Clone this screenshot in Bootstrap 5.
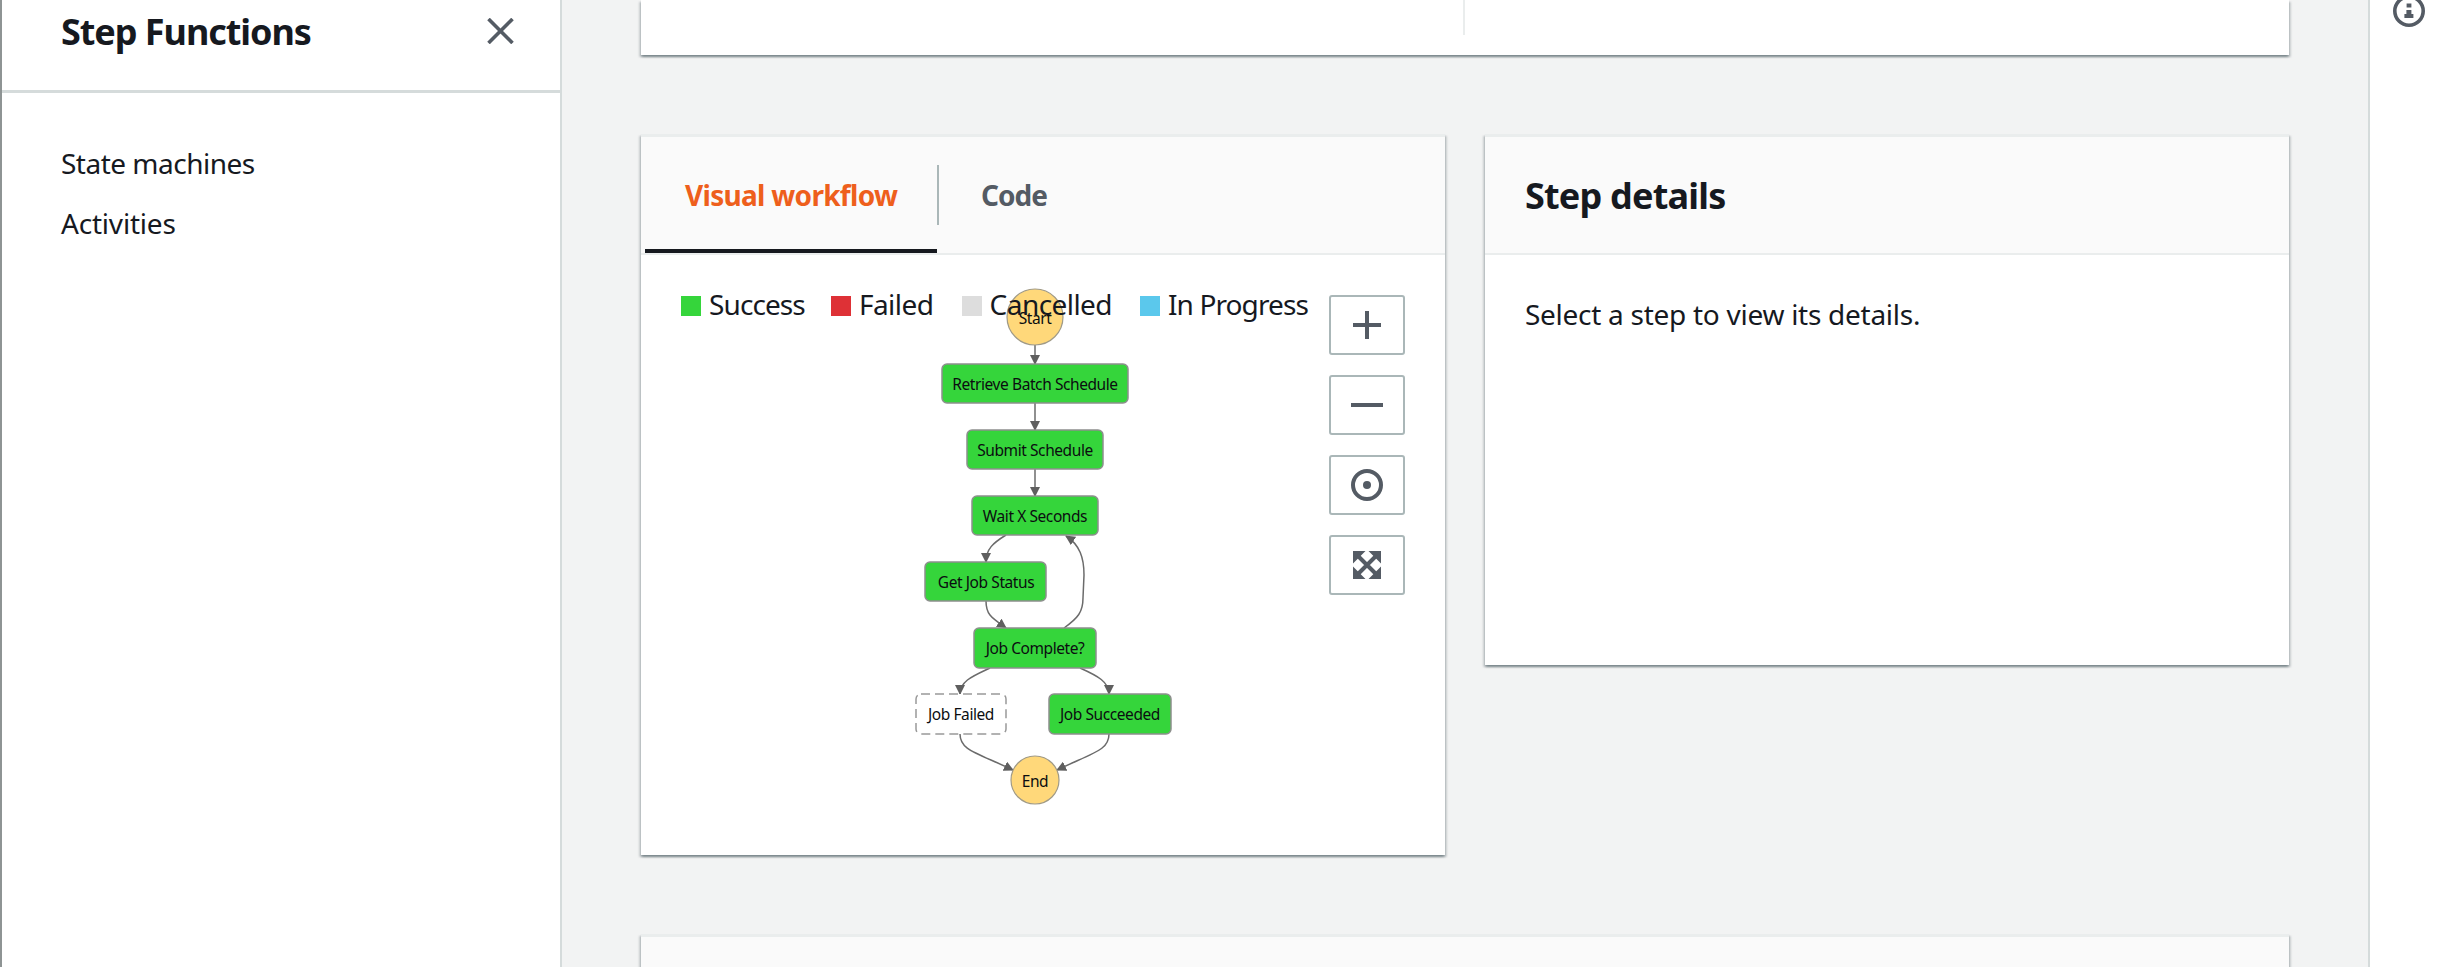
<!DOCTYPE html>
<html lang="en">
<head>
<meta charset="utf-8">
<title>Step Functions</title>
<link href="https://cdn.jsdelivr.net/npm/bootstrap@5.3.0/dist/css/bootstrap.min.css" rel="stylesheet">
<style>
html,body{height:967px;overflow:hidden}
body{font-family:"Noto Sans","Open Sans",sans-serif;font-size:28px;color:#16191f;background:#f2f3f3}
.shell{height:967px;overflow:hidden}
.side-panel{width:562px;flex:none;background:#fff;border-left:2px solid #8e9494;border-right:2px solid #d5dbdb}
.side-head{height:93px;border-bottom:3px solid #d5dbdb;padding:10px 0 0 59px}
.side-title{font-size:36px;font-weight:700;line-height:44px;margin:0;letter-spacing:-1.05px}
.side-close{position:absolute;left:485px;top:18px;width:27px;height:26px}
.side-nav{padding:40px 0 0 59px}
.side-nav a{display:block;color:#16191f;text-decoration:none;line-height:60px;letter-spacing:-.5px}
.side-nav a+a{letter-spacing:-.2px}
.main-area{flex:1 1 auto;min-width:0;padding:0 79px;background:#f2f3f3}
.aws-card{--bs-card-border-width:0;--bs-card-border-radius:0;--bs-card-inner-border-radius:0;--bs-card-cap-padding-y:0;--bs-card-cap-padding-x:0;--bs-card-cap-bg:#fafafa;border-top:3px solid #eaeded;box-shadow:0 2px 2px rgba(0,28,36,.3),2px 2px 2px rgba(0,28,36,.15),-2px 2px 2px rgba(0,28,36,.15)}
.top-card{height:55px;border-top:0;margin-bottom:79px}
.top-split{width:2px;height:35px;background:#eaeded;margin-left:822px}
.pair{gap:40px;height:721px;margin-bottom:79px}
.half{width:804px;flex:none}
.wf-card{height:721px}
.detail-card{height:531px}
.tab-head{height:118px;border-bottom:2px solid #eaeded;padding-left:4px;background:#fafafa}
.tab-one{width:292px;height:116px;border-bottom:4px solid #16191f;padding:36px 0 0 40px;color:#ee5f1c;font-weight:700;line-height:44px;position:relative;letter-spacing:-.7px}
.tab-one::after{content:"";position:absolute;right:-2px;top:28px;height:60px;width:2px;background:#aab7b8}
.tab-two{padding:36px 0 0 44px;color:#545b64;font-weight:700;line-height:44px;letter-spacing:-1px}
.wf-body{position:relative;flex:1 1 auto;background:#fff}
.legend-row{position:absolute;left:40px;top:29px;gap:28px;line-height:40px;letter-spacing:-.9px}
.leg-fail{margin-left:-2px;letter-spacing:-.5px}
.leg-can{letter-spacing:-.55px}
.swatch{display:inline-block;width:20px;height:20px;margin-right:8px;vertical-align:-1px}
.sw-ok{background:#35d53b}.sw-bad{background:#de3136}.sw-can{background:#ddd}.sw-run{background:#5bc8ec}
.graph{position:absolute;left:0;top:0;width:804px;height:600px}
.graph text{font-family:"Noto Sans",sans-serif;font-size:15.5px;letter-spacing:-.42px;fill:#0b0d10;text-anchor:middle;dominant-baseline:central}
.graph .nd{fill:#35d53b;stroke:#8d8f8d;stroke-width:1.5}
.graph .nd-fail{fill:#fff;stroke:#999;stroke-width:1.5;stroke-dasharray:9 5}
.graph .nd-end{fill:#ffd87a;stroke:#a09a86;stroke-width:1.2}
.graph .edge{fill:none;stroke:#6b6b6b;stroke-width:1.5}
.graph .tip{fill:#5f5f5f}
.tool-col{position:absolute;left:688px;top:40px;gap:20px}
.tool-btn{--bs-btn-padding-x:0;--bs-btn-padding-y:0;--bs-btn-border-width:2px;--bs-btn-border-color:#aab7b8;--bs-btn-border-radius:3px;--bs-btn-bg:#fff;width:76px;height:60px;display:flex;align-items:center;justify-content:center}
.detail-title{height:118px;border-bottom:2px solid #eaeded;padding:0 40px;font-size:36px;font-weight:700;line-height:118px;margin:0;letter-spacing:-.8px;background:#fafafa}
.detail-text{padding:39px 40px 0;line-height:40px;margin:0;letter-spacing:-.27px}
.low-card{height:33px}
.low-head{height:30px;background:#fafafa}
.right-rail{width:74px;flex:none;background:#fff;border-left:2px solid #d5dbdb;padding:0}
.info-ico{display:block;margin:-5px 0 0 23px}
</style>
</head>
<body>
<div class="shell d-flex">
  <aside class="side-panel position-relative">
    <div class="side-head">
      <h2 class="side-title">Step Functions</h2>
    </div>
    <svg class="side-close" viewBox="0 0 27 26"><path d="M1.5 1 25.5 25M25.5 1 1.5 25" fill="none" stroke="#545b64" stroke-width="3.6"/></svg>
    <nav class="side-nav">
      <a href="#">State machines</a>
      <a href="#">Activities</a>
    </nav>
  </aside>
  <main class="main-area">
    <div class="card aws-card top-card"><div class="top-split"></div></div>
    <div class="d-flex pair">
      <div class="half">
        <div class="card aws-card wf-card">
          <div class="d-flex tab-head">
            <div class="tab-one">Visual workflow</div>
            <div class="tab-two">Code</div>
          </div>
          <div class="wf-body">
            <svg class="graph" viewBox="641 255 804 600" aria-label="State machine graph">
              <defs>
                <marker id="ah" markerWidth="10" markerHeight="10" refX="9" refY="5" orient="auto" markerUnits="userSpaceOnUse"><path class="tip" d="M0 0 10 5 0 10z"/></marker>
              </defs>
              <path class="edge" marker-end="url(#ah)" d="M1035 345V364"/>
              <path class="edge" marker-end="url(#ah)" d="M1035 403V430"/>
              <path class="edge" marker-end="url(#ah)" d="M1035 469V496"/>
              <path class="edge" marker-end="url(#ah)" d="M1006 535C993 543 986 549 986 562"/>
              <path class="edge" marker-end="url(#ah)" d="M1064 628C1078 618 1083 612 1083 598L1084 575C1084 558 1080 545 1066 536"/>
              <path class="edge" marker-end="url(#ah)" d="M986 601C986 615 992 618 1006 628"/>
              <path class="edge" marker-end="url(#ah)" d="M990 668C973 676 960 681 960 694"/>
              <path class="edge" marker-end="url(#ah)" d="M1080 668C1098 676 1109 682 1109 694"/>
              <path class="edge" marker-end="url(#ah)" d="M960 734C960 750 975 752 1013 770"/>
              <path class="edge" marker-end="url(#ah)" d="M1109 734C1109 750 1095 752 1057 770"/>
              <ellipse class="nd-end" cx="1035" cy="317" rx="28" ry="28"/><text x="1035" y="318">Start</text>
              <rect class="nd" x="942" y="364" width="186" height="39" rx="5"/><text x="1035" y="384">Retrieve Batch Schedule</text>
              <rect class="nd" x="967" y="430" width="136" height="39" rx="5"/><text x="1035" y="450">Submit Schedule</text>
              <rect class="nd" x="972" y="496" width="126" height="39" rx="5"/><text x="1035" y="516">Wait X Seconds</text>
              <rect class="nd" x="925" y="562" width="121" height="39" rx="5"/><text x="986" y="582">Get Job Status</text>
              <rect class="nd" x="974" y="628" width="122" height="40" rx="5"/><text x="1035" y="648">Job Complete?</text>
              <rect class="nd-fail" x="916" y="694" width="90" height="40" rx="5"/><text x="961" y="714">Job Failed</text>
              <rect class="nd" x="1049" y="694" width="122" height="40" rx="5"/><text x="1110" y="714">Job Succeeded</text>
              <circle class="nd-end" cx="1035" cy="780" r="24"/><text x="1035" y="781">End</text>
            </svg>
            <div class="legend-row d-flex">
              <span><i class="swatch sw-ok"></i>Success</span>
              <span class="leg-fail"><i class="swatch sw-bad"></i>Failed</span>
              <span class="leg-can"><i class="swatch sw-can"></i>Cancelled</span>
              <span><i class="swatch sw-run"></i>In Progress</span>
            </div>
            <div class="tool-col d-flex flex-column">
              <button class="btn tool-btn" aria-label="Zoom in"><svg width="28" height="28" viewBox="0 0 28 28"><path d="M14 0V28M0 14H28" stroke="#545b64" stroke-width="4"/></svg></button>
              <button class="btn tool-btn" aria-label="Zoom out"><svg width="32" height="4" viewBox="0 0 32 4"><path d="M0 2H32" stroke="#545b64" stroke-width="4"/></svg></button>
              <button class="btn tool-btn" aria-label="Center"><svg width="32" height="32" viewBox="0 0 32 32"><circle cx="16" cy="16" r="14" fill="none" stroke="#545b64" stroke-width="4"/><circle cx="16" cy="16" r="4" fill="#545b64"/></svg></button>
              <button class="btn tool-btn" aria-label="Fit"><svg width="28" height="28" viewBox="0 0 28 28"><path fill="#545b64" d="M0 0H12.5L0 12.5zM28 0V12.5L15.5 0zM0 28V15.5L12.5 28zM28 28H15.5L28 15.5z"/><path d="M4 4 24 24M24 4 4 24" stroke="#545b64" stroke-width="4"/></svg></button>
            </div>
          </div>
        </div>
      </div>
      <div class="half">
        <div class="card aws-card detail-card">
          <h2 class="detail-title">Step details</h2>
          <p class="detail-text">Select a step to view its details.</p>
        </div>
      </div>
    </div>
    <div class="card aws-card low-card"><div class="low-head"></div></div>
  </main>
  <aside class="right-rail">
    <svg class="info-ico" width="32" height="32" viewBox="0 0 32 32"><circle cx="16" cy="16" r="14.2" fill="none" stroke="#545b64" stroke-width="3.6"/><path fill="#545b64" d="M13.6 8.5h4.8v4h-4.8zM13.4 15h5v4h2v4h-9v-4h2z"/></svg>
  </aside>
</div>
<script src="https://cdn.jsdelivr.net/npm/bootstrap@5.3.0/dist/js/bootstrap.bundle.min.js"></script>
</body>
</html>
